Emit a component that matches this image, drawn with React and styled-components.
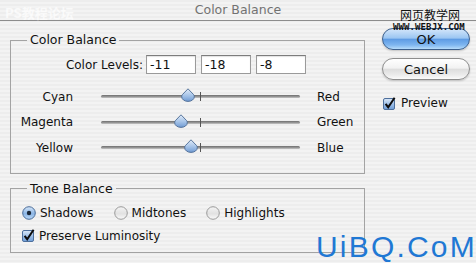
import React from 'react';
import styled, { createGlobalStyle } from 'styled-components';

const GlobalStyle = createGlobalStyle`
  html, body {
    margin: 0;
    padding: 0;
    background: #eeeeee;
  }
  * {
    box-sizing: border-box;
  }
`;

const Window = styled.div`
  position: relative;
  width: 476px;
  height: 263px;
  overflow: hidden;
  font-family: 'DejaVu Sans', 'Noto Sans', sans-serif;
  font-size: 12px;
  color: #111;
  background: repeating-linear-gradient(
    to bottom,
    #ededed 0,
    #ededed 2px,
    #f3f3f3 2px,
    #f3f3f3 4px
  );
`;

const TitleBar = styled.div`
  height: 21px;
  border-bottom: 1px solid #8c8c8c;
  display: flex;
  align-items: center;
  justify-content: center;
  font-size: 12.5px;
  color: #727272;
  padding-bottom: 1px;
`;

const Main = styled.div`
  display: flex;
  padding-left: 10px;
`;

const LeftCol = styled.div`
  width: 355px;
`;

const RightCol = styled.div`
  margin-left: 17px;
  width: 88px;
  padding-top: 7px;
  display: flex;
  flex-direction: column;
`;

const Group = styled.fieldset`
  margin: ${(p) => p.$top}px 0 0 0;
  padding: 0;
  border: 1px solid #a3a3a3;
  min-width: 0;
`;

const Legend = styled.legend`
  margin-left: 16px;
  padding: 0 3px;
  font-size: 12.5px;
  line-height: 14px;
  color: #111;
`;

const GroupBody = styled.div`
  padding: ${(p) => p.$pad};
`;

const LevelsRow = styled.div`
  display: grid;
  grid-template-columns: 130px 50px 50px 50px;
  column-gap: 5px;
  align-items: center;
  & > label {
    text-align: right;
    margin-right: -2px;
  }
`;

const LevelInput = styled.div`
  height: 19px;
  background: #fff;
  border: 1px solid #9a9a9a;
  border-top-color: #7c7c7c;
  box-shadow: inset 0 1px 1px rgba(0, 0, 0, 0.12);
  padding: 0 3px;
  font-size: 12.5px;
  line-height: 17px;
`;

const SliderList = styled.div`
  margin-top: 10px;
`;

const SliderRow = styled.div`
  display: grid;
  grid-template-columns: 62px 227px auto;
  height: 25.5px;
  align-items: center;
`;

const LeftLabel = styled.span`
  text-align: right;
`;

const RightLabel = styled.span`
  margin-left: 17px;
`;

const TrackWrap = styled.div`
  position: relative;
  height: 25px;
  margin-left: 28px;
  width: 199px;
`;

const Track = styled.div`
  position: absolute;
  left: 0;
  right: 0;
  top: 11px;
  height: 3px;
  border-radius: 2px;
  background: linear-gradient(to bottom, #6e6e6e, #9a9a9a 60%, #c8c8c8);
`;

const Tick = styled.div`
  position: absolute;
  left: 99px;
  top: 8px;
  width: 1px;
  height: 9px;
  background: #555;
`;

const ThumbBox = styled.div`
  position: absolute;
  top: 4px;
  width: 14px;
  height: 14px;
  margin-left: -7px;
`;

const ToneRow = styled.div`
  display: flex;
  align-items: center;
  gap: 20px;
  padding-left: 11px;
  height: 16px;
`;

const OptionItem = styled.label`
  display: flex;
  align-items: center;
  gap: 4px;
  height: 16px;
`;

const LumRow = styled.div`
  margin-top: 7px;
  padding-left: 11px;
  height: 16px;
  display: flex;
`;

const AquaButton = styled.div`
  height: 22px;
  border-radius: 11px;
  display: flex;
  align-items: center;
  justify-content: center;
  font-size: 13px;
  color: #111;
  margin-bottom: 8px;
  border: 1px solid ${(p) => (p.$primary ? '#3c5f8c' : '#8d8d8d')};
  background: ${(p) =>
    p.$primary
      ? 'linear-gradient(to bottom, #d3e6fa 0%, #9cc6f2 45%, #5f9ce4 52%, #7fb6f0 80%, #b7dcfb 100%)'
      : 'linear-gradient(to bottom, #ffffff 0%, #f2f2f2 45%, #dedede 52%, #ececec 80%, #fbfbfb 100%)'};
  box-shadow: 0 1px 2px rgba(0, 0, 0, 0.2);
`;

const PreviewRow = styled.label`
  margin-top: 7px;
  margin-left: 1px;
  display: flex;
  align-items: center;
  gap: 5px;
  height: 16px;
`;

const Watermark = styled.div`
  position: absolute;
  left: ${(p) => p.$x}px;
  top: ${(p) => p.$y}px;
  white-space: nowrap;
  pointer-events: none;
`;

const CnMark = styled(Watermark)`
  font-family: 'Noto Sans CJK SC', sans-serif;
  font-size: 12px;
  line-height: 14px;
  color: #111;
`;

const FaintMark = styled(Watermark)`
  font-family: 'Noto Sans CJK SC', sans-serif;
  font-size: 13px;
  font-weight: bold;
  color: rgba(255, 255, 255, 0.7);
`;

const UrlMark = styled(Watermark)`
  font-family: 'DejaVu Sans Mono', monospace;
  font-weight: bold;
  font-size: 9px;
  line-height: 9px;
  letter-spacing: 0.1px;
  color: #111;
`;

const BigMark = styled(Watermark)`
  font-family: 'Liberation Sans', Arial, sans-serif;
  font-size: 30px;
  line-height: 30px;
  letter-spacing: 2.2px;
  color: #1f78d4;
`;

function CheckBox() {
  return (
    <svg width="13" height="13" viewBox="0 0 13 13">
      <defs>
        <linearGradient id="cbg" x1="0" y1="0" x2="0" y2="1">
          <stop offset="0" stopColor="#dce9f8" />
          <stop offset="0.5" stopColor="#9fc0e8" />
          <stop offset="1" stopColor="#6f9ed8" />
        </linearGradient>
      </defs>
      <rect x="0.5" y="1.5" width="11" height="11" rx="1.5" fill="url(#cbg)" stroke="#4d6f9c" />
      <path d="M2.6 6.8 L5.2 10.2 L11.6 0.8" fill="none" stroke="#0d0d0d" strokeWidth="2" />
    </svg>
  );
}

function Radio({ checked }) {
  return (
    <svg width="14" height="14" viewBox="0 0 14 14">
      <defs>
        <linearGradient id="rOn" x1="0" y1="0" x2="0" y2="1">
          <stop offset="0" stopColor="#d6e6f8" />
          <stop offset="0.55" stopColor="#8cb6e6" />
          <stop offset="1" stopColor="#b8d6f6" />
        </linearGradient>
        <linearGradient id="rOff" x1="0" y1="0" x2="0" y2="1">
          <stop offset="0" stopColor="#f4f4f4" />
          <stop offset="0.55" stopColor="#e2e2e2" />
          <stop offset="1" stopColor="#fafafa" />
        </linearGradient>
      </defs>
      <circle
        cx="7"
        cy="7"
        r="6.3"
        fill={checked ? 'url(#rOn)' : 'url(#rOff)'}
        stroke={checked ? '#4a6c98' : '#9a9a9a'}
      />
      {checked && <circle cx="7" cy="7" r="2.2" fill="#1b2738" />}
    </svg>
  );
}

function Thumb() {
  return (
    <svg width="14" height="14" viewBox="0 0 14 14">
      <defs>
        <linearGradient id="thg" x1="0" y1="0" x2="0" y2="1">
          <stop offset="0" stopColor="#e2ecf8" />
          <stop offset="0.55" stopColor="#a5c3e8" />
          <stop offset="1" stopColor="#6f9ad2" />
        </linearGradient>
      </defs>
      <path
        d="M7 0.8 L12.6 6.6 Q13.3 7.5 13.3 8.8 A6.3 4.6 0 0 1 0.7 8.8 Q0.7 7.5 1.4 6.6 Z"
        fill="url(#thg)"
        stroke="#4b6a93"
        strokeWidth="0.9"
      />
    </svg>
  );
}

const levels = [-11, -18, -8];

const sliders = [
  { left: 'Cyan', right: 'Red', value: -11 },
  { left: 'Magenta', right: 'Green', value: -18 },
  { left: 'Yellow', right: 'Blue', value: -8 },
];

const tones = [
  { label: 'Shadows', checked: true },
  { label: 'Midtones', checked: false },
  { label: 'Highlights', checked: false },
];

function Slider({ value }) {
  const pos = 99.5 + (value / 100) * 99.5 - 1.5;
  return (
    <TrackWrap>
      <Track />
      <Tick />
      <ThumbBox style={{ left: `${pos}px` }}>
        <Thumb />
      </ThumbBox>
    </TrackWrap>
  );
}

export default function App() {
  return (
    <Window>
      <GlobalStyle />
      <TitleBar>Color Balance</TitleBar>
      <Main>
        <LeftCol>
          <Group $top={12}>
            <Legend>Color Balance</Legend>
            <GroupBody $pad="8px 0 12px 0">
              <LevelsRow>
                <label>Color Levels:</label>
                {levels.map((v, i) => (
                  <LevelInput key={i}>{v}</LevelInput>
                ))}
              </LevelsRow>
              <SliderList>
                {sliders.map((s) => (
                  <SliderRow key={s.left}>
                    <LeftLabel>{s.left}</LeftLabel>
                    <Slider value={s.value} />
                    <RightLabel>{s.right}</RightLabel>
                  </SliderRow>
                ))}
              </SliderList>
            </GroupBody>
          </Group>
          <Group $top={8}>
            <Legend>Tone Balance</Legend>
            <GroupBody $pad="9px 0 8px 0">
              <ToneRow>
                {tones.map((t) => (
                  <OptionItem key={t.label}>
                    <Radio checked={t.checked} />
                    <span>{t.label}</span>
                  </OptionItem>
                ))}
              </ToneRow>
              <LumRow>
                <OptionItem>
                  <CheckBox />
                  <span>Preserve Luminosity</span>
                </OptionItem>
              </LumRow>
            </GroupBody>
          </Group>
        </LeftCol>
        <RightCol>
          <AquaButton $primary>OK</AquaButton>
          <AquaButton>Cancel</AquaButton>
          <PreviewRow>
            <CheckBox />
            <span>Preview</span>
          </PreviewRow>
        </RightCol>
      </Main>
      <FaintMark $x={5} $y={3}>PS教程论坛</FaintMark>
      <CnMark $x={400} $y={8}>网页教学网</CnMark>
      <UrlMark $x={393} $y={23}>WWW.WEBJX.COM</UrlMark>
      <BigMark $x={316} $y={232}>UiBQ.CoM</BigMark>
    </Window>
  );
}
